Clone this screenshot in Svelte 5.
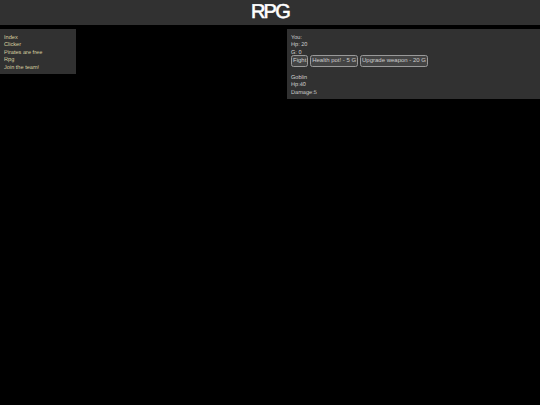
<script lang="ts">
	const links = ['Index', 'Clicker', 'Pirates are free', 'Rpg', 'Join the team!'];
	const actions = ['Fight', 'Health pot! - 5 G', 'Upgrade weapon - 20 G'];
</script>

<header>
	<h1>RPG</h1>
</header>

<main>
	<nav>
		{#each links as link}
			<a href="#top">{link}</a>
		{/each}
	</nav>

	<section>
		<div>You:</div>
		<div>Hp: 20</div>
		<div>G: 0</div>
		<div class="actions">
			{#each actions as action}
				<button>{action}</button>
			{/each}
		</div>
		<div class="enemy">Goblin</div>
		<div>Hp:40</div>
		<div>Damage:5</div>
	</section>
</main>

<style>
	:global(body) {
		background: #000;
		font-family: "Liberation Sans", Arial, sans-serif;
		font-size: 5.6px;
		line-height: 7.4px;
		color: #ccc;
		text-rendering: geometricPrecision;
	}

	header {
		height: 25px;
		background: #313131;
		display: flex;
		justify-content: center;
		align-items: center;
	}

	h1 {
		margin: 0;
		font-size: 20px;
		line-height: 25px;
		font-weight: 400;
		letter-spacing: -1.7px;
		color: #fff;
		-webkit-text-stroke: 0.6px #fff;
	}

	main {
		display: flex;
		justify-content: space-between;
		align-items: flex-start;
		margin-top: 4px;
	}

	nav {
		width: 76px;
		box-sizing: border-box;
		padding: 6px 4px 2px;
		background: #313131;
		display: flex;
		flex-direction: column;
	}

	a {
		color: #d8d0a0;
		text-decoration: none;
	}

	section {
		width: 253px;
		box-sizing: border-box;
		padding: 6px 4px 1.8px;
		background: #313131;
	}

	.actions {
		display: flex;
		gap: 1.8px;
		margin-top: -2.2px;
	}

	button {
		height: 11.5px;
		padding: 0 1px;
		font: inherit;
		font-size: 6px;
		line-height: 9px;
		color: #ccc;
		background: #444;
		border: 0.8px solid #999;
		border-radius: 2.5px;
	}

	.enemy {
		margin-top: 8.5px;
	}
</style>
